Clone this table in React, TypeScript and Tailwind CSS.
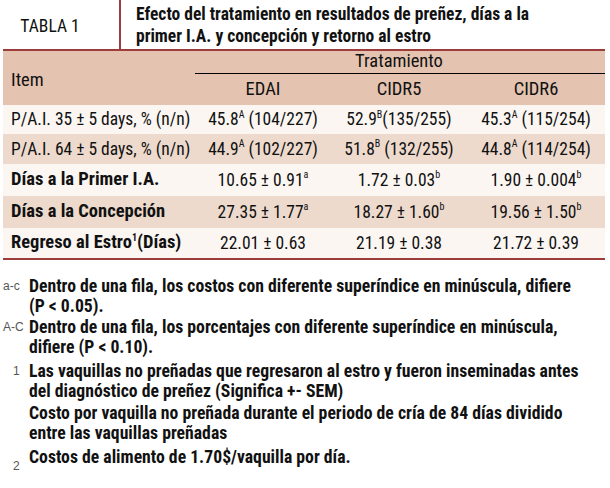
import React from "react"

const cond = "font-['Roboto',sans-serif] font-stretch-condensed"
const arial = "font-['Liberation_Sans',Arial,sans-serif] font-stretch-normal"

interface Row {
    label: React.ReactNode
    bold?: boolean
    bg: string
    h: string
    values: React.ReactNode[]
}

const Sup = ({ children }: { children: React.ReactNode }) => (
    <sup className="text-[10px] top-[-0.75em]">{children}</sup>
)

const rows: Row[] = [
    {
        label: "P/A.I. 35 ± 5 days, % (n/n)",
        bg: "bg-[#fbf6f2]",
        h: "h-[29px]",
        values: [
            <>45.8<Sup>A</Sup> (104/227)</>,
            <>52.9<Sup>B</Sup>(135/255)</>,
            <>45.3<Sup>A</Sup> (115/254)</>,
        ],
    },
    {
        label: "P/A.I. 64 ± 5 days, % (n/n)",
        bg: "bg-[#eddacd]",
        h: "h-[30px]",
        values: [
            <>44.9<Sup>A</Sup> (102/227)</>,
            <>51.8<Sup>B</Sup> (132/255)</>,
            <>44.8<Sup>A</Sup> (114/254)</>,
        ],
    },
    {
        label: "Días a la Primer I.A.",
        bold: true,
        bg: "bg-[#fbf6f2]",
        h: "h-[32px]",
        values: [
            <>10.65 ± 0.91<Sup>a</Sup></>,
            <>1.72 ± 0.03<Sup>b</Sup></>,
            <>1.90 ± 0.004<Sup>b</Sup></>,
        ],
    },
    {
        label: "Días a la Concepción",
        bold: true,
        bg: "bg-[#eddacd]",
        h: "h-[32px]",
        values: [
            <>27.35 ± 1.77<Sup>a</Sup></>,
            <>18.27 ± 1.60<Sup>b</Sup></>,
            <>19.56 ± 1.50<Sup>b</Sup></>,
        ],
    },
    {
        label: <>Regreso al Estro<Sup>1</Sup>(Días)</>,
        bold: true,
        bg: "bg-[#fbf6f2]",
        h: "h-[30px]",
        values: [<>22.01 ± 0.63</>, <>21.19 ± 0.38</>, <>21.72 ± 0.39</>],
    },
]

const noteLabel = `w-[29px] shrink-0 font-normal text-[12px] text-[#555] ${arial}`

export default function App() {
    return (
        <div className={`w-[610px] h-[488px] overflow-hidden bg-white text-[#111] ${cond}`}>
            {/* caption */}
            <div className="flex h-[49px]">
                <div className="w-[121px] border-r-2 border-[#9e3b3b] flex items-center justify-center pr-[19px] pt-[4px] text-[17.5px]">
                    TABLA 1
                </div>
                <div className="pl-[15px] pt-[3px] font-bold text-[17.5px] leading-[22px]">
                    <div>Efecto del tratamiento en resultados de preñez, días a la</div>
                    <div>primer I.A. y concepción y retorno al estro</div>
                </div>
            </div>

            {/* table */}
            <div className="mx-[3px] w-[602px] border-t-2 border-b-2 border-[#9e3b3b]">
                <div className="grid grid-cols-[192px_136px_136px_138px] grid-rows-[23px_31px] bg-[#e4c3b0] text-[18.5px]">
                    <div className="row-span-2 flex items-center pl-[8px] pt-[5px]">Item</div>
                    <div className="col-span-3 flex items-center justify-center border-b-[1.5px] border-black pr-[2px]">
                        Tratamiento
                    </div>
                    <div className="flex items-center justify-center">EDAI</div>
                    <div className="flex items-center justify-center">CIDR5</div>
                    <div className="flex items-center justify-center">CIDR6</div>
                </div>
                {rows.map((r, i) => (
                    <div key={i} className={`grid grid-cols-[192px_136px_136px_138px] ${r.bg} ${r.h} text-[17.5px]`}>
                        <div className={`flex items-center pl-[8px] whitespace-nowrap ${r.bold ? "font-bold text-[18.5px]" : ""}`}>
                            <span>{r.label}</span>
                        </div>
                        {r.values.map((v, j) => (
                            <div key={j} className="flex items-center justify-center whitespace-nowrap">
                                <span>{v}</span>
                            </div>
                        ))}
                    </div>
                ))}
            </div>

            {/* footnotes */}
            <div className="mt-[16px] font-bold text-[17.7px] leading-[20px]">
                <div className="flex">
                    <span className={`${noteLabel} pl-[3px]`}>a-c</span>
                    <div>
                        Dentro de una fila, los costos con diferente superíndice en minúscula, difiere
                        <br />
                        (P &lt; 0.05).
                    </div>
                </div>
                <div className="flex mt-[1px]">
                    <span className={`${noteLabel} pl-[3px]`}>A-C</span>
                    <div>
                        Dentro de una fila, los porcentajes con diferente superíndice en minúscula,
                        <br />
                        difiere (P &lt; 0.10).
                    </div>
                </div>
                <div className="flex mt-[4px]">
                    <span className={`${noteLabel} pl-[13px]`}>1</span>
                    <div>
                        Las vaquillas no preñadas que regresaron al estro y fueron inseminadas antes
                        <br />
                        del diagnóstico de preñez (Significa +- SEM)
                        <div className="mt-[2px]">
                            Costo por vaquilla no preñada durante el periodo de cría de 84 días dividido
                            <br />
                            entre las vaquillas preñadas
                        </div>
                    </div>
                </div>
                <div className="flex mt-[4px]">
                    <span className={`${noteLabel} pl-[13px] pt-[9px]`}>2</span>
                    <div>Costos de alimento de 1.70$/vaquilla por día.</div>
                </div>
            </div>
        </div>
    )
}
